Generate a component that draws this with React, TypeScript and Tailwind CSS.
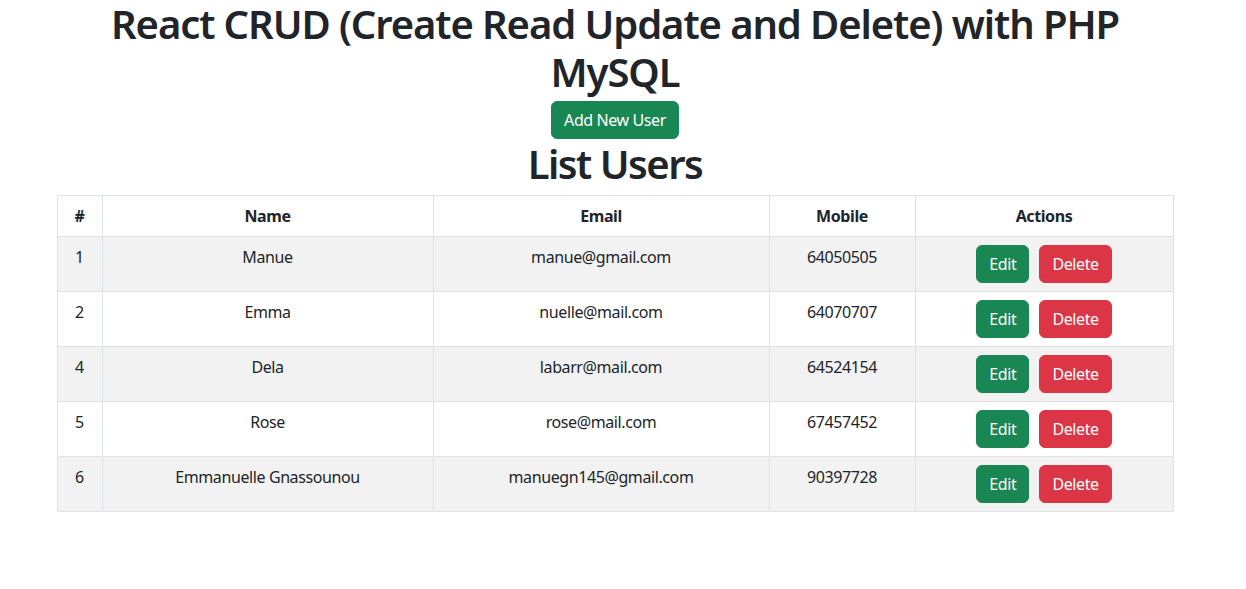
import React from 'react';

type User = { id: number; name: string; email: string; mobile: string };

const users: User[] = [
  { id: 1, name: 'Manue', email: 'manue@gmail.com', mobile: '64050505' },
  { id: 2, name: 'Emma', email: 'nuelle@mail.com', mobile: '64070707' },
  { id: 4, name: 'Dela', email: 'labarr@mail.com', mobile: '64524154' },
  { id: 5, name: 'Rose', email: 'rose@mail.com', mobile: '67457452' },
  { id: 6, name: 'Emmanuelle Gnassounou', email: 'manuegn145@gmail.com', mobile: '90397728' },
];

export default function App() {
  return (
    <div className="min-h-[589px] w-[1230px] bg-white font-['Noto_Sans',sans-serif] text-[16px] leading-6 tracking-[-0.4px] text-[#212529]">
      <div className="mx-auto flex w-[1116px] flex-col items-center">
        {/* Heading */}
        <h1 className="text-center text-[40px] font-semibold leading-[48px] tracking-[-1.1px]">
          React CRUD (Create Read Update and Delete) with PHP MySQL
        </h1>
        <button className="mt-[5px] rounded-md border border-[#198754] bg-[#198754] px-3 py-1.5 text-white">
          Add New User
        </button>
        <h1 className="mt-px mb-[7px] text-[40px] font-semibold leading-[48px] tracking-[-1.5px]">List Users</h1>

        {/* Users table */}
        <table className="w-[1116px] table-fixed border-collapse text-center">
          <colgroup>
            <col className="w-[45px]" />
            <col className="w-[331px]" />
            <col className="w-[336px]" />
            <col className="w-[146px]" />
            <col className="w-[258px]" />
          </colgroup>
          <thead>
            <tr>
              {['#', 'Name', 'Email', 'Mobile', 'Actions'].map((h) => (
                <th key={h} className="border border-[#dee2e6] p-2 align-bottom font-bold">
                  {h}
                </th>
              ))}
            </tr>
          </thead>
          <tbody>
            {users.map((u, i) => (
              <tr key={u.id} className={i % 2 === 0 ? 'bg-[#f2f2f2]' : 'bg-white'}>
                <td className="border border-[#dee2e6] p-2 align-top">{u.id}</td>
                <td className="border border-[#dee2e6] p-2 align-top">{u.name}</td>
                <td className="border border-[#dee2e6] p-2 align-top">{u.email}</td>
                <td className="border border-[#dee2e6] p-2 align-top">{u.mobile}</td>
                <td className="border border-[#dee2e6] p-2 align-top">
                  <div className="flex justify-center gap-2.5">
                    <button className="rounded-md border border-[#198754] bg-[#198754] px-3 py-1.5 text-white">
                      Edit
                    </button>
                    <button className="rounded-md border border-[#dc3545] bg-[#dc3545] px-3 py-1.5 text-white">
                      Delete
                    </button>
                  </div>
                </td>
              </tr>
            ))}
          </tbody>
        </table>
      </div>
    </div>
  );
}
